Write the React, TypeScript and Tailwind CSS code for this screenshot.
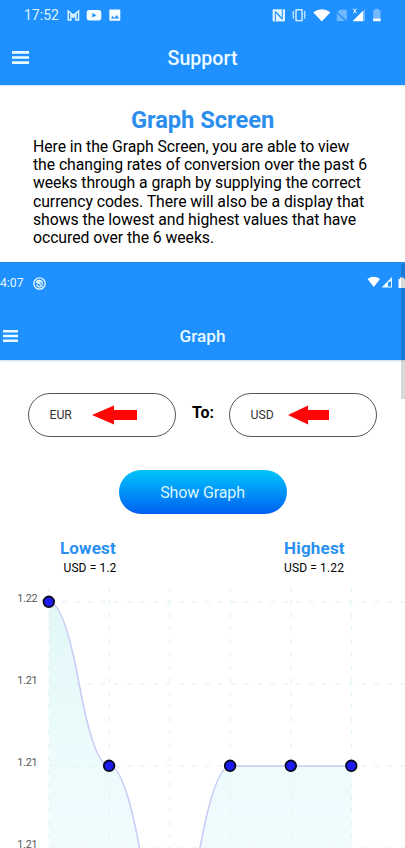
import React from "react";

const columns = [49, 109.3, 169.7, 230.3, 291, 351.5];
const rows = [22, 104, 186, 268];
const values = [22, 186, 350, 186, 186, 186];
const labels = ["1.22", "1.21", "1.21", "1.21"];

function smoothLine() {
  let d = `M${columns[0]} ${values[0]}`;
  for (let i = 0; i < columns.length - 1; i++) {
    const mx = (columns[i] + columns[i + 1]) / 2;
    const my = (values[i] + values[i + 1]) / 2;
    d += ` Q${(mx + columns[i]) / 2} ${values[i]} ${mx} ${my}`;
    d += ` Q${(mx + columns[i + 1]) / 2} ${values[i + 1]} ${columns[i + 1]} ${values[i + 1]}`;
  }
  return d;
}

function Menu({ className }: { className: string }) {
  return (
    <svg className={className} viewBox="0 0 17 13" preserveAspectRatio="none">
      <path d="M0 1.4H17M0 6.5H17M0 11.6H17" stroke="#e9fbff" strokeWidth="2.7" />
    </svg>
  );
}

function NotificationIcons() {
  return (
    <svg className="ml-[8px] h-[16px] w-[56px]" viewBox="67 7 56 16" fill="none">
      <path d="M68.2 20V11l5.2 4.4L78.6 11V20h-2.7v-4.8l-2.5 2.1-2.5-2.1V20z" stroke="#e3f6ff" strokeWidth="1.4" />
      <rect x="86.7" y="10" width="14.6" height="10.4" rx="2.6" fill="#f4fdff" />
      <path d="M92.4 13v4.5l4-2.25z" fill="#1e90ff" />
      <rect x="109.3" y="9.4" width="11" height="11.4" rx="1" fill="#f4fdff" />
      <path d="M110.8 18.6l2-2.6 1.7 1.9 2.1-2.9 2.6 3.6z" fill="#1e90ff" />
    </svg>
  );
}

function SystemIcons() {
  return (
    <svg className="ml-auto h-[18px] w-[133px]" viewBox="272 6 133 18" fill="none">
      <rect x="272.6" y="9.2" width="12.4" height="12.2" rx="1" fill="#dff4ff" />
      <path d="M275.3 21.4V11.8l6.8 7.6M282.3 9.2v9.6l-6.8-7.6" stroke="#1e90ff" strokeWidth="1" />
      <rect x="296" y="9.8" width="6" height="10.8" stroke="#d3efff" strokeWidth="1.4" />
      <path d="M293.8 11l-1 1.5 1 1.2-1 1.6 1 1.5-1 2M304.2 11l1 1.5-1 1.2 1 1.6-1 1.5 1 2" stroke="#d3efff" strokeWidth="1.1" />
      <path d="M313.2 12.3q8.5-6.2 17.2 0l-8.6 9.3z" fill="#fff" />
      <path d="M340 9.7h6.8v10.7L337.2 12z M336.8 13.5l8.3 7.6h-8.3z" fill="#70b8ff" />
      <path d="M365 9v12.2h-2V11z" fill="#70b8ff" />
      <path d="M363 10.8v10.4h-10.5z" fill="#fff" />
      <path d="M353.3 8.6l3 4.6M356.3 8.6l-3 4.6" stroke="#fff" strokeWidth="1" />
      <path d="M375 8.8h3.8v1.5h1.7v8.5h-7.3v-8.5h1.8z" fill="#76bbff" />
      <rect x="373.1" y="18.5" width="7.6" height="2.7" fill="#fff" />
    </svg>
  );
}

function CurrencyField({ code, arrow }: { code: string; arrow: string }) {
  return (
    <div className="flex h-[44px] w-[148px] items-center rounded-full border border-[#555] pl-[20.5px]">
      <span className="w-[24px] text-[12.2px] leading-4 text-[#333]">{code}</span>
      <svg className={`h-[20px] shrink-0 ${arrow}`} viewBox="0 0 46 20" preserveAspectRatio="none">
        <path d="M0 10L22.5 .5V5H46V15H22.5V19.5z" fill="#ff0505" />
      </svg>
    </div>
  );
}

function RateChart() {
  const line = smoothLine();
  return (
    <svg className="block h-[268px] w-[405px]" viewBox="0 0 405 268">
      <defs>
        <linearGradient id="area" x1="0" y1="22" x2="0" y2="268" gradientUnits="userSpaceOnUse">
          <stop stopColor="#e3f7f7" />
          <stop offset=".55" stopColor="#ebfbfc" />
          <stop offset="1" stopColor="#f1fbfe" />
        </linearGradient>
      </defs>
      <path d={`${line} V400 H49 Z`} fill="url(#area)" />
      <g stroke="#e0f4f1" strokeWidth="1.1" strokeDasharray="5 8">
        {columns.map((x) => <path key={x} d={`M${x} 7V268`} />)}
        {rows.map((y) => <path key={y} d={`M49 ${y}H405`} />)}
      </g>
      <path d={line} fill="none" stroke="#c9ccf5" strokeWidth="1.6" />
      {columns.map((x, i) => (
        <circle key={x} cx={x - 0.2} cy={values[i] - 0.2} r="5.3" fill="#1c1cf0" stroke="#080820" strokeWidth="1.8" />
      ))}
      {rows.map((y, i) => (
        <text key={y} x="17.3" y={y} fontSize="10.8" fill="#555" textLength="20.2">{labels[i]}</text>
      ))}
    </svg>
  );
}

export default function App() {
  return (
    <main className="relative h-[848px] w-[405px] overflow-hidden bg-white font-['Roboto',sans-serif] text-black">
      <header className="h-[85px] bg-[#1e90ff] text-white shadow-[0_1px_1px_#d9e9f7]">
        <div className="flex h-[30px] items-center">
          <time className="ml-[24px] w-[35px] whitespace-nowrap text-[14px] text-[#def4ff]">17:52</time>
          <NotificationIcons />
          <SystemIcons />
        </div>
        <div className="grid h-[55px] grid-cols-[1fr_auto_1fr]">
          <Menu className="ml-[12px] mt-[21px] h-[13px] w-[17px]" />
          <h1 className="pt-[15px] text-[19.6px] font-medium leading-[27px] text-[#ecfaff]">Support</h1>
        </div>
      </header>

      <section className="h-[177px] pt-[19px]">
        <h2 className="text-center text-[23.7px] font-bold leading-[32px] tracking-[-0.05px] text-[#2b8eed]">Graph Screen</h2>
        <p className="ml-[33px] mt-[1.5px] whitespace-nowrap text-[15.8px] leading-[18.35px] tracking-[-0.065px]">
          Here in the Graph Screen, you are able to view<br />
          the changing rates of conversion over the past 6<br />
          weeks through a graph by supplying the correct<br />
          currency codes. There will also be a display that<br />
          shows the lowest and highest values that have<br />
          occured over the 6 weeks.
        </p>
      </section>

      <header className="h-[98px] border-t border-[#2484df] bg-[#1e90ff] text-[#e9f9ff] shadow-[0_1px_2px_#cbd9e6]">
        <div className="flex h-[40px] items-center">
          <time className="w-[24px] text-[12.2px]">4:07</time>
          <svg className="ml-[9px] h-[13px] w-[13px]" viewBox="0 0 13 13" fill="none" stroke="#e6f8ff">
            <circle cx="6.5" cy="6.5" r="5.7" strokeWidth="1.3" />
            <path d="M3.4 6C3.5 3.2 7.6 2.4 9.1 5.2L9.6 7.4M3.6 7.6c.8 2.2 3 2.6 4.6 1.8" strokeWidth="1.4" />
            <path d="M5 5l4.6 4.6M5.2 5h2.6M5 5v2" strokeWidth="1.3" />
          </svg>
          <svg className="ml-auto h-[14px] w-[38px]" viewBox="367 276 38 14">
            <path d="M367.5 279q6.2-4.4 12.5 0l-6.2 8z" fill="#fff" />
            <path d="M392 277v10.5h-10.5z" fill="#eafaff" />
            <path d="M391 281v5.5h-3v-3.7z" fill="#1e90ff" />
            <path d="M398.5 279h1.5v-1.5h4V279h1v9h-6.5z" fill="#fff" />
          </svg>
        </div>
        <div className="grid h-[57px] grid-cols-[1fr_auto_1fr]">
          <Menu className="ml-[3px] mt-[27px] h-[12px] w-[15px]" />
          <h2 className="pt-[20px] text-[17.2px] font-medium leading-[26px]">Graph</h2>
        </div>
      </header>

      <section className="flex pl-[28px] pt-[33px]">
        <CurrencyField code="EUR" arrow="ml-[18px] w-[45px]" />
        <b className="w-[53px] pl-[16px] pt-[9px] text-[16px] leading-[22px] tracking-[-0.1px]">To:</b>
        <CurrencyField code="USD" arrow="ml-[13px] w-[41px]" />
      </section>

      <button className="mx-auto mt-[33px] block h-[44px] w-[168px] rounded-full bg-linear-to-b from-[#0bc4fb] to-[#005df0] pt-[2px] text-[16px] tracking-[-0.13px] text-[#d9f6ff]">Show Graph</button>

      <section className="flex h-[66px] pt-[22px]">
        <div className="ml-[60px] w-[57px]">
          <h3 className="text-[17px] font-bold leading-[24px] tracking-[0.15px] text-[#2b91f0]">Lowest</h3>
          <p className="ml-[3.5px] whitespace-nowrap text-[12px] leading-[16px] tracking-[0.1px]">USD = 1.2</p>
        </div>
        <div className="ml-[167px]">
          <h3 className="text-[17px] font-bold leading-[24px] tracking-[0.2px] text-[#2b91f0]">Highest</h3>
          <p className="whitespace-nowrap text-[12px] leading-[16px] tracking-[0.13px]">USD = 1.22</p>
        </div>
      </section>
      <RateChart />
      <div className="absolute right-0 top-[264px] h-[135px] w-[4px] bg-black/15" />
    </main>
  );
}
